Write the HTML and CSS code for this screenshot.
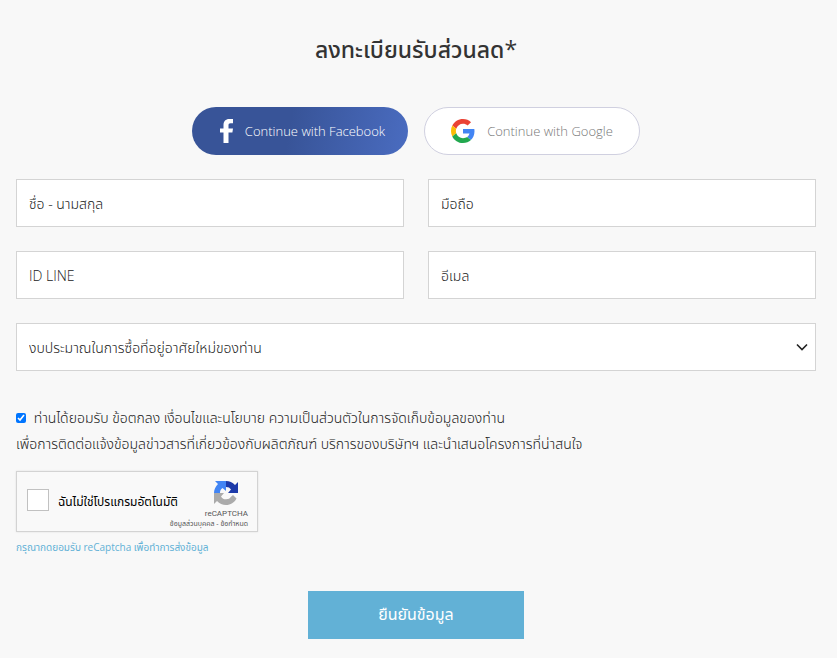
FILE: index.html
```html
<!DOCTYPE html>
<html lang="th">
<head>
    <meta charset="UTF-8">
    <meta name="viewport" content="width=device-width, initial-scale=1.0">
    <title>ลงทะเบียนรับส่วนลด</title>
    <link rel="stylesheet" href="styles.css">
</head>
<body>
    <div class="container">
        <h1>ลงทะเบียนรับส่วนลด*</h1>

        <!-- Social login -->
        <div class="social">
            <button type="button" class="social-btn facebook">
                <svg width="24" height="24" viewBox="0 0 24 24" aria-hidden="true">
                    <path fill="#fff" d="M8.5 24V13.500H5V9.500H8.500V6C8.500 2.200 10.700 0 14.200 0H18V4.200H15.600C13.900 4.200 13.500 5 13.500 6.400V9.500H18L17.400 13.500H13.500V24Z"/>
                </svg>
                <span>Continue with Facebook</span>
            </button>
            <button type="button" class="social-btn google">
                <svg width="24" height="24" viewBox="0 0 48 48" aria-hidden="true">
                    <path fill="#ea4335" d="M24 9.500c3.540 0 6.710 1.220 9.210 3.600l6.850-6.850C35.900 2.380 30.470 0 24 0 14.620 0 6.510 5.380 2.560 13.220l7.980 6.190C12.430 13.720 17.740 9.500 24 9.500z"/>
                    <path fill="#4285f4" d="M46.980 24.550c0-1.570-.15-3.090-.38-4.550H24v9.020h12.940c-.58 2.960-2.260 5.480-4.780 7.180l7.730 6c4.510-4.180 7.090-10.360 7.090-17.650z"/>
                    <path fill="#fbbc05" d="M10.530 28.590c-.48-1.450-.76-2.990-.76-4.590s.27-3.140.76-4.590l-7.980-6.190C.92 16.460 0 20.120 0 24c0 3.880.92 7.540 2.560 10.780l7.970-6.190z"/>
                    <path fill="#22a84f" d="M24 48c6.480 0 11.930-2.130 15.890-5.810l-7.730-6c-2.150 1.450-4.920 2.300-8.160 2.300-6.260 0-11.570-4.220-13.470-9.910l-7.980 6.190C6.510 42.620 14.620 48 24 48z"/>
                </svg>
                <span>Continue with Google</span>
            </button>
        </div>

        <form id="register-form">
            <div class="fields">
                <input type="text" name="name" placeholder="ชื่อ - นามสกุล" aria-label="ชื่อ - นามสกุล">
                <input type="tel" name="phone" placeholder="มือถือ" aria-label="มือถือ">
                <input type="text" name="line" placeholder="ID LINE" aria-label="ID LINE">
                <input type="email" name="email" placeholder="อีเมล" aria-label="อีเมล">
                <div class="select-box">
                    <select name="budget" aria-label="งบประมาณในการซื้อที่อยู่อาศัยใหม่ของท่าน">
                        <option>งบประมาณในการซื้อที่อยู่อาศัยใหม่ของท่าน</option>
                    </select>
                    <svg class="arrow" width="12" height="8" viewBox="0 0 12 8" aria-hidden="true">
                        <path d="M1 1.500L6 6.500L11 1.500" fill="none" stroke="#222" stroke-width="1.600"/>
                    </svg>
                </div>
            </div>

            <div class="consent">
                <input type="checkbox" id="accept" name="accept" checked>
                <label for="accept">ท่านได้ยอมรับ ข้อตกลง เงื่อนไขและนโยบาย ความเป็นส่วนตัวในการจัดเก็บข้อมูลของท่าน<br>
                เพื่อการติดต่อแจ้งข้อมูลข่าวสารที่เกี่ยวข้องกับผลิตภัณฑ์ บริการของบริษัทฯ และนำเสนอโครงการที่น่าสนใจ</label>
            </div>

            <!-- Captcha -->
            <div class="captcha">
                <input type="checkbox" id="robot" name="robot">
                <label for="robot">ฉันไม่ใช่โปรแกรมอัตโนมัติ</label>
                <div class="captcha-brand">
                    <svg width="26" height="26" viewBox="0 0 26 26" aria-hidden="true">
                        <path fill="#1c3aa9" d="M13 1C16.500 1 19.500 2.500 22 5L25 2V13H15L18 9.500C16.800 7.800 15.500 7 13 7Z"/>
                        <path fill="#4285f4" d="M13 1V11L9.500 8C7.800 9.200 7 10.500 7 13H1C1 9.500 2.500 6.500 5 4L2 1Z"/>
                        <path fill="#ababab" d="M1 13H11L8 16.500C9.200 18.500 10.800 19.300 13 19.300C15.500 19.300 17 18.500 18 16.800L20 15L23.500 18.500C21.500 22.500 17.500 25 13 25C9.500 25 6.500 23.500 4 21L1 24Z"/>
                    </svg>
                    <span class="brand-name">reCAPTCHA</span>
                    <span class="brand-links"><a href="#">ข้อมูลส่วนบุคคล</a> - <a href="#">ข้อกำหนด</a></span>
                </div>
            </div>
            <p class="note">กรุณากดยอมรับ reCaptcha เพื่อทำการส่งข้อมูล</p>

            <button type="submit" class="submit-btn">ยืนยันข้อมูล</button>
        </form>
    </div>
</body>
</html>
```
FILE: styles.css
```css
* {
    box-sizing: border-box;
}

body {
    font-family: "Open Sans", "Noto Sans Thai", "Noto Sans", sans-serif;
    font-size: 14px;
    font-weight: 300;
    margin: 0;
    background-color: #f8f8f8;
    color: #222;
}

input, select, button {
    font-family: inherit;
    font-size: 14px;
    font-weight: 300;
}

.container {
    padding: 31px 21px 19px 16px;
}

h1 {
    margin: 0;
    color: #333;
    font-size: 23px;
    font-weight: 500;
    line-height: 36px;
    text-align: center;
}

/* Social buttons */
.social {
    display: flex;
    justify-content: center;
    gap: 16px;
    margin: 40px 0 24px;
}

.social-btn {
    display: flex;
    align-items: center;
    justify-content: center;
    gap: 12px;
    width: 216px;
    height: 48px;
    padding: 0;
    border: none;
    border-radius: 24px;
    font-size: 13px;
    white-space: nowrap;
    cursor: pointer;
}

.facebook {
    gap: 6px;
    background: linear-gradient(100deg, #385498 45%, #4a6cc0);
    color: #fff;
}

.google {
    border: 1px solid #d0d0e0;
    background-color: #fff;
    color: #777;
}

/* Form fields */
.fields {
    display: grid;
    grid-template-columns: 1fr 1fr;
    gap: 24px;
}

.fields input, .fields select {
    width: 100%;
    height: 48px;
    padding: 0 12px;
    border: 1px solid #d4d4d4;
    border-radius: 0;
    background-color: #fff;
    color: #222;
}

.fields input::placeholder {
    color: #222;
    opacity: 1;
}

.select-box {
    position: relative;
    grid-column: 1 / 3;
}

.fields select {
    display: block;
    appearance: none;
}

.arrow {
    position: absolute;
    right: 8px;
    top: 20px;
    pointer-events: none;
}

.consent {
    margin-top: 34px;
    line-height: 26px;
}

.consent input {
    width: 10px;
    height: 10px;
    margin: 0 4px 0 0;
}

/* Captcha box */
.captcha {
    display: flex;
    align-items: center;
    width: 242px;
    height: 61px;
    margin-top: 14px;
    padding: 0 9px 0 10px;
    border: 1px solid #d3d3d3;
    background-color: #f9f9f9;
    box-shadow: 0 0 2px rgba(0, 0, 0, 0.1);
    color: #000;
    font-weight: 400;
}

.captcha input {
    appearance: none;
    flex: none;
    width: 22px;
    height: 22px;
    margin: 0 9px 4px 0;
    border: 1px solid #c1c1c1;
    background-color: #fff;
}

.captcha label {
    font-size: 12px;
    white-space: nowrap;
}

.captcha-brand {
    display: flex;
    flex: 1;
    flex-direction: column;
    align-items: flex-end;
    width: 0;
    padding-top: 4px;
    color: #555;
    white-space: nowrap;
}

.captcha-brand svg {
    margin: 0 9px 2px 0;
}

.brand-name {
    font-family: Roboto, sans-serif;
    font-size: 8px;
    line-height: 12px;
}

.brand-links {
    font-size: 7px;
    line-height: 8px;
}

.brand-links a {
    color: #555;
    text-decoration: none;
}

.note {
    margin: 8px 0 36px;
    font-size: 10px;
    font-weight: 400;
    line-height: 15px;
    color: #62b1d6;
}

.submit-btn {
    display: block;
    width: 216px;
    height: 48px;
    margin: 0 auto;
    border: none;
    background-color: #62b1d6;
    color: #fff;
    font-size: 16px;
    font-weight: 400;
    cursor: pointer;
}
```
